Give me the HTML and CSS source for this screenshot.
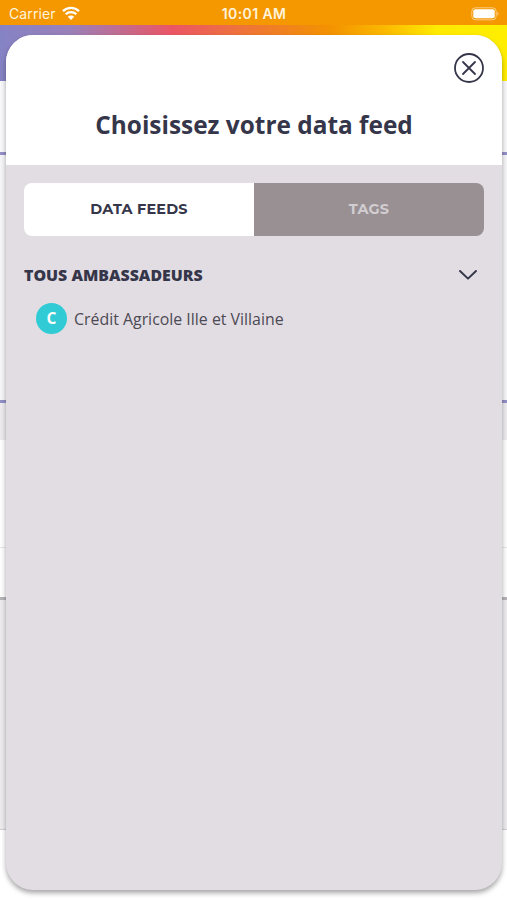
FILE: index.html
```
<!DOCTYPE html>
<html lang="fr">
<head>
  <meta charset="UTF-8">
  <title>Data feeds</title>
  <link rel="stylesheet" href="styles.css">
</head>
<body>
<div class="status-bar">
  <div class="carrier">
    <span>Carrier</span>
    <svg width="18" height="15" viewBox="0 0 18 15">
      <path d="M1 5.2a11.5 11.5 0 0 1 16 0M3.7 8.3a7.6 7.6 0 0 1 10.6 0" fill="none" stroke="#fff" stroke-width="2.3"/>
      <path d="M5.8 10.8a4.6 4.6 0 0 1 6.4 0L9 14z" fill="#fff"/>
    </svg>
  </div>
  <div class="time">10:01 AM</div>
  <svg class="battery" width="30" height="14" viewBox="0 0 30 14">
    <rect x=".8" y=".8" width="24.4" height="12" rx="3.5" fill="none" stroke="#fff" stroke-opacity=".5"/>
    <rect x="2.3" y="2.3" width="21.4" height="9" rx="2" fill="#fff"/>
    <path d="M26.3 4.8q2.6 2 0 4z" fill="#fff" fill-opacity=".5"/>
  </svg>
</div>

<div class="page">
  <div class="page-header"></div>
  <div class="page-filter"></div>
  <div class="page-banner"></div>
  <div class="page-gap"></div>
  <div class="page-card"></div>
  <div class="page-actions"></div>
  <div class="page-list"></div>
</div>

<div class="modal">
  <div class="modal-header">
    <svg class="close" width="32" height="32" viewBox="0 0 32 32">
      <circle cx="16" cy="16" r="14"/>
      <path d="M10 10l12 12M22 10L10 22"/>
    </svg>
    <h1 class="modal-title">Choisissez votre data feed</h1>
  </div>
  <div class="modal-content">
    <div class="tabs">
      <div class="tab active"><span>DATA FEEDS</span></div>
      <div class="tab"><span>TAGS</span></div>
    </div>
    <div class="group">
      <h2 class="group-title">TOUS AMBASSADEURS</h2>
      <svg class="chevron" width="20" height="12" viewBox="0 0 20 12">
        <path d="M2 2l8 7.6L18 2"/>
      </svg>
    </div>
    <div class="feed">
      <div class="avatar">C</div>
      <div class="feed-name">Crédit Agricole Ille et Villaine</div>
    </div>
  </div>
</div>
</body>
</html>
```
FILE: styles.css
```
* {
  box-sizing: border-box;
}
body {
  margin: 0;
  height: 900px;
  overflow: hidden;
  position: relative;
  display: flex;
  flex-direction: column;
  background-color: #fff;
  font-family: "Open Sans", "Noto Sans", sans-serif;
  color: #35364a;
}

/* Status bar */
.status-bar {
  height: 25px;
  padding: 2px 6px 0 9px;
  display: grid;
  grid-template-columns: 1fr auto 1fr;
  align-items: center;
  background-color: #f59800;
  color: #fff3dc;
  font-family: Inter, sans-serif;
  font-size: 14px;
  line-height: 20px;
}
.carrier {
  display: flex;
  align-items: center;
  gap: 6px;
  letter-spacing: .1px;
}
.time {
  margin-right: 2px;
  font-weight: 600;
  font-size: 14px;
  letter-spacing: .4px;
}
.battery {
  justify-self: end;
}

/* Page under the modal */
.page {
  flex: 1;
  display: flex;
  flex-direction: column;
}
.page-header {
  height: 56px;
  background: linear-gradient(90deg, #8583c5 0, #9a80b8 14%, #eb5665 34%, #ee7040 46%, #f39200 65%, #fbb900 76%, #ffea00 86%, #ffee00 100%);
}
.page-filter {
  height: 74px;
  background-color: #f8f7f9;
  border-bottom: 3px solid #9290c6;
}
.page-banner {
  height: 248px;
  background-color: #f6f5f7;
  border-bottom: 3px solid #9290c6;
}
.page-gap {
  height: 37px;
  background-color: #edebee;
}
.page-card {
  height: 108px;
  background-color: #fdfdfd;
  border-bottom: 1px solid #e6e5e7;
}
.page-actions {
  height: 52px;
  background-color: #fdfdfd;
  border-bottom: 3px solid #b5b3b7;
}
.page-list {
  height: 230px;
  background-color: #edebee;
  border-bottom: 1px solid #d2d0d3;
}

/* Modal */
.modal {
  position: absolute;
  top: 35px;
  left: 6px;
  width: 496px;
  height: 855px;
  display: flex;
  flex-direction: column;
  overflow: hidden;
  border-radius: 27px;
  background-color: #e2dde3;
  box-shadow: 0 3px 5px rgba(0, 0, 0, .35);
}
.modal-header {
  height: 130px;
  padding: 17px 17px 0;
  display: flex;
  flex-direction: column;
  background-color: #fff;
}
.close {
  align-self: flex-end;
  fill: none;
  stroke: #35364a;
  stroke-width: 1.8;
  stroke-linecap: round;
}
.modal-title {
  margin: 24px 0 0;
  text-align: center;
  font-size: 24.4px;
  line-height: 34px;
  font-weight: 700;
}
.modal-content {
  flex: 1;
  padding: 18px;
}
.tabs {
  height: 53px;
  display: flex;
  overflow: hidden;
  border-radius: 8px;
}
.tab {
  flex: 1;
  padding-bottom: 2px;
  display: flex;
  align-items: center;
  justify-content: center;
  background-color: #999094;
  color: #d2cdd1;
  font-family: Montserrat, Inter, sans-serif;
  font-size: 14.4px;
  line-height: 20px;
  font-weight: 700;
  letter-spacing: .2px;
}
.tab.active {
  background-color: #fff;
  color: #35364a;
}
.group {
  margin-top: 28px;
  padding-right: 6px;
  display: flex;
  align-items: center;
  justify-content: space-between;
}
.group-title {
  margin: 0;
  font-size: 15.9px;
  line-height: 22px;
  font-weight: 800;
}
.chevron {
  fill: none;
  stroke: #35364a;
  stroke-width: 2;
  stroke-linecap: round;
  stroke-linejoin: round;
}
.feed {
  margin-top: 17px;
  padding-left: 12px;
  display: flex;
  align-items: center;
  gap: 7px;
}
.avatar {
  width: 31px;
  height: 31px;
  border-radius: 50%;
  background-color: #30cbd5;
  color: #fff;
  font-size: 15.5px;
  line-height: 31px;
  font-weight: 700;
  text-align: center;
}
.feed-name {
  font-size: 15.9px;
  line-height: 22px;
  color: #4c4a54;
}
```
